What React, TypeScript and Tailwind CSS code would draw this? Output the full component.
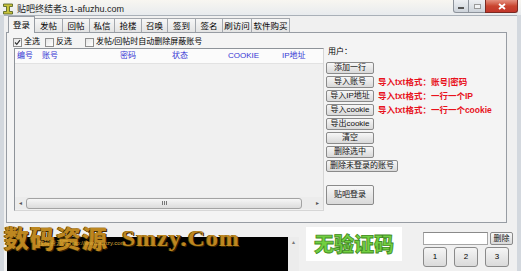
import React from "react";

// 贴吧终结者 main window — Win7 basic frame, tab page with account list, bottom log area.

const TABS: [string, number][] = [
  ["登录", 27], ["发帖", 28], ["回帖", 27], ["私信", 25], ["抢楼", 27],
  ["召唤", 26], ["签到", 28], ["签名", 27], ["刷访问", 29], ["软件购买", 38],
];

const COLS: [string, number][] = [["编号", 25], ["账号", 78], ["密码", 52], ["状态", 56], ["COOKIE", 54], ["IP地址", 40]];

const BTN = "flex shrink-0 items-center justify-center rounded-[2px] border border-[#8a8a8a] bg-linear-to-b from-[#f7f7f7] to-[#d9d9d9] text-[8px] leading-none text-[#111]";

function Btn({ children, w = 48, h = 12 }: { children: React.ReactNode; w?: number; h?: number }) {
  return <div className={BTN} style={{ width: w, height: h }}>{children}</div>;
}

function Check({ checked, label, className = "" }: { checked?: boolean; label: string; className?: string }) {
  return (
    <div className={"flex items-center " + className}>
      <span className="flex h-[9px] w-[9px] items-center justify-center border border-[#8f8f8f] bg-linear-to-br from-[#e6e6e6] to-white">
        {checked && (
          <svg width="7" height="7" viewBox="0 0 7 7"><path d="M1 3.5 L2.8 5.4 L6 1.2" fill="none" stroke="#333" strokeWidth="1.2" /></svg>
        )}
      </span>
      <span className="ml-[2px] text-[8px] leading-none">{label}</span>
    </div>
  );
}

export default function App() {
  return (
    <div className="flex h-[271px] w-[521px] flex-col overflow-hidden bg-[#d3d8de] font-['Liberation_Sans','Noto_Sans_CJK_SC',sans-serif] text-black">
      {/* title bar */}
      <div className="flex h-[17px] items-start bg-linear-to-b from-[#f8f6f1] to-[#e8ebee]">
        <svg className="ml-[3px] mt-[3px]" width="10" height="12" viewBox="0 0 10 12">
          <path d="M0.5 1 H9.5 V3.5 H6.5 V8.5 H9.5 V11 H0.5 V8.5 H3.5 V3.5 H0.5 Z" fill="#c8c23a" stroke="#4b5a1c" strokeWidth="0.8" />
        </svg>
        <span className="ml-[4px] mt-[4px] text-[9px] leading-[11px] text-[#222]">贴吧终结者3.1-afuzhu.com</span>
        <div className="ml-auto mr-[3px] flex">
          <div className="flex h-[13px] w-[16px] items-end justify-center rounded-bl-[3px] border border-t-0 border-[#8d939b] bg-linear-to-b from-[#eef0f3] to-[#cdd3da] pb-[3px]">
            <span className="h-[2px] w-[6px] border border-[#555] bg-white" />
          </div>
          <div className="flex h-[13px] w-[16px] items-center justify-center border-b border-[#8d939b] bg-linear-to-b from-[#eef0f3] to-[#cdd3da]">
            <span className="h-[5px] w-[7px] border border-[#9a9a9a] bg-white/60" />
          </div>
          <div className="flex h-[13px] w-[33px] items-center justify-center rounded-br-[3px] border border-t-0 border-[#7a2a22] bg-linear-to-b from-[#e4907f] via-[#c9452f] to-[#c2352a]">
            <svg width="8" height="7" viewBox="0 0 8 7"><path d="M1 1 L7 6 M7 1 L1 6" stroke="#fff" strokeWidth="1.8" /></svg>
          </div>
        </div>
      </div>

      {/* client area */}
      <div className="mx-[4px] flex flex-1 flex-col border-t border-[#a9b0b8] bg-[#f0f0f0]">
        {/* tabs */}
        <div className="flex h-[16px] items-end pl-[4px]">
          {TABS.map(([t, w], i) =>
            i === 0 ? (
              <div key={t} className="relative z-10 -mb-px flex h-[17px] items-center justify-center border border-b-0 border-[#979ca3] bg-[#f4f4f4] pt-[1px] text-[8.5px] leading-none" style={{ width: w }}>
                {t}
              </div>
            ) : (
              <div key={t} className="-ml-px flex h-[14px] items-center justify-center border border-b-0 border-[#a3a7ad] bg-linear-to-b from-[#f7f7f7] to-[#e3e3e3] pt-[1px] text-[8.5px] leading-none" style={{ width: w + 1 }}>
                {t}
              </div>
            )
          )}
        </div>

        {/* tab page */}
        <div className="ml-[2px] flex h-[191px] w-[501px] flex-col border border-[#979ca3] bg-[#f4f4f4] pl-[6px]">
          <div className="mt-[4px] flex h-[10px] items-center">
            <Check checked label="全选" />
            <Check label="反选" className="ml-[5px]" />
            <Check label="发帖/回帖时自动删除屏蔽账号" className="ml-[13px]" />
          </div>

          <div className="mt-[1px] flex">
            {/* account list */}
            <div className="ml-[1px] flex h-[163px] w-[310px] flex-col border border-[#8e9399] border-r-[#d6d6d6] border-b-[#d6d6d6] bg-[#f0f0f0]">
              <div className="flex h-[15px] items-center border-b border-[#e2e2e2] bg-[#fbfbfb] pl-[2px] text-[8px] leading-none text-[#3636d4]">
                {COLS.map(([c, w]) => (
                  <span key={c} className="shrink-0" style={{ width: w }}>{c}</span>
                ))}
              </div>
              <div className="flex-1" />
              <div className="mb-px flex h-[12px] items-center bg-[#ececec]">
                <span className="flex w-[11px] justify-center text-[6px] leading-none text-[#555]">◂</span>
                <div className="flex h-[11px] w-[276px] items-center justify-center rounded-[3px] border border-[#a3a3a3] bg-linear-to-b from-[#f6f6f6] to-[#dcdcdc]">
                  <span className="flex gap-px">
                    <span className="h-[4px] w-px bg-[#777]" />
                    <span className="h-[4px] w-px bg-[#777]" />
                    <span className="h-[4px] w-px bg-[#777]" />
                  </span>
                </div>
                <div className="flex-1" />
                <span className="flex w-[11px] justify-center text-[6px] leading-none text-[#555]">▸</span>
              </div>
            </div>

            {/* right column */}
            <div className="-mt-[4px] ml-[2px] flex flex-col">
              <div className="flex h-[14px] items-center pl-[2px] pt-[1px] text-[8px] leading-none">用户：</div>
              <div className="mt-[4px] flex flex-col gap-[2px]">
                <Btn>添加一行</Btn>
                <div className="flex items-center">
                  <Btn>导入账号</Btn>
                  <span className="ml-[4px] text-[8.5px] font-bold leading-none text-[#e8121c]">导入txt格式：账号|密码</span>
                </div>
                <div className="flex items-center">
                  <Btn>导入IP地址</Btn>
                  <span className="ml-[4px] text-[8.5px] font-bold leading-none text-[#e8121c]">导入txt格式：一行一个IP</span>
                </div>
                <div className="flex items-center">
                  <Btn>导入cookie</Btn>
                  <span className="ml-[4px] text-[8.5px] font-bold leading-none text-[#e8121c]">导入txt格式：一行一个cookie</span>
                </div>
                <Btn>导出cookie</Btn>
                <Btn>清空</Btn>
                <Btn>删除选中</Btn>
                <Btn w={72}>删除未登录的账号</Btn>
              </div>
              <div className="mt-[13px]">
                <Btn h={20}>贴吧登录</Btn>
              </div>
            </div>
          </div>
        </div>

        {/* bottom area */}
        <div className="relative flex flex-1">
          <div className="ml-[3px] mt-[14px] h-[40px] w-[281px] bg-black" />
          <div className="mt-[14px] flex h-[40px] w-[11px] justify-center bg-[#ececec] pt-[2px]">
            <span className="text-[6px] leading-none text-[#777]">▴</span>
          </div>
          <div className="ml-[7px] mt-[4px] flex h-[34px] w-[96px] items-center justify-center bg-white">
            <span className="font-['Noto_Sans_CJK_SC',sans-serif] text-[20px] font-black leading-none text-[#72d040] [-webkit-text-stroke:0.8px_#3f8a22]">无验证码</span>
          </div>
          <div className="ml-auto mr-[4px] mt-[9px] flex flex-col">
            <div className="flex gap-[2px]">
              <div className="h-[13px] w-[65px] border border-[#a6a6a6] border-t-[#8a8a8a] bg-white" />
              <Btn w={23} h={13}>删除</Btn>
            </div>
            <div className="mt-[2px] flex gap-[7px]">
              {["1", "2", "3"].map((n) => (
                <div key={n} className="flex h-[20px] w-[24px] items-center justify-center rounded-[3px] border border-[#8a8a8a] bg-linear-to-b from-[#f5f5f5] to-[#dadada] text-[8px] leading-none">
                  {n}
                </div>
              ))}
            </div>
          </div>

          {/* watermark overlay */}
          <div className="pointer-events-none absolute left-0 top-[2px] flex items-end">
            <span className="font-['Noto_Sans_CJK_SC',serif] text-[25px] font-black leading-none tracking-[1px] text-[#bd8720] [text-shadow:1px_1px_0_#3d2600,-1px_0_0_#6b4500]">数码资源</span>
            <span className="ml-[14px] font-['Liberation_Serif',serif] text-[24px] font-bold leading-none tracking-[1px] text-[#bd8720] [text-shadow:1px_1px_0_#3d2600,-1px_0_0_#6b4500]">Smzy.Com</span>
            <span className="absolute left-[34px] top-[15px] text-[6px] leading-none text-[#d8a838]">数码资源网 http://www.smzy.com</span>
          </div>
        </div>
      </div>
    </div>
  );
}
